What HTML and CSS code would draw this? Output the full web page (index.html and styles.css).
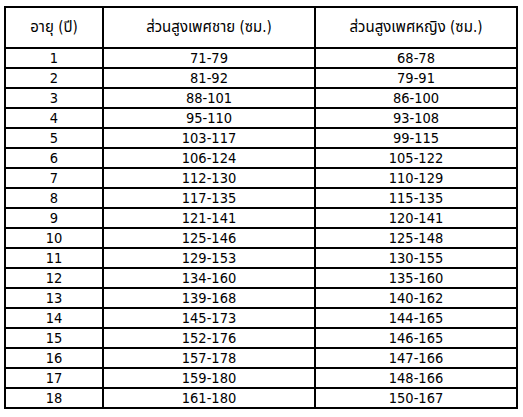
FILE: index.html
```html
<!DOCTYPE html>
<html lang="th">
<head>
<meta charset="utf-8">
<link rel="stylesheet" href="styles.css">
</head>
<body>
<table class="grid">
<colgroup><col class="c1"><col class="c2"><col class="c3"></colgroup>
<thead>
<tr><th>อายุ (ปี)</th><th>ส่วนสูงเพศชาย (ซม.)</th><th>ส่วนสูงเพศหญิง (ซม.)</th></tr>
</thead>
<tbody>
<tr><td>1</td><td>71-79</td><td>68-78</td></tr>
<tr><td>2</td><td>81-92</td><td>79-91</td></tr>
<tr><td>3</td><td>88-101</td><td>86-100</td></tr>
<tr><td>4</td><td>95-110</td><td>93-108</td></tr>
<tr><td>5</td><td>103-117</td><td>99-115</td></tr>
<tr><td>6</td><td>106-124</td><td>105-122</td></tr>
<tr><td>7</td><td>112-130</td><td>110-129</td></tr>
<tr><td>8</td><td>117-135</td><td>115-135</td></tr>
<tr><td>9</td><td>121-141</td><td>120-141</td></tr>
<tr><td>10</td><td>125-146</td><td>125-148</td></tr>
<tr><td>11</td><td>129-153</td><td>130-155</td></tr>
<tr><td>12</td><td>134-160</td><td>135-160</td></tr>
<tr><td>13</td><td>139-168</td><td>140-162</td></tr>
<tr><td>14</td><td>145-173</td><td>144-165</td></tr>
<tr><td>15</td><td>152-176</td><td>146-165</td></tr>
<tr><td>16</td><td>157-178</td><td>147-166</td></tr>
<tr><td>17</td><td>159-180</td><td>148-166</td></tr>
<tr><td>18</td><td>161-180</td><td>150-167</td></tr>
</tbody>
</table>
</body>
</html>
```
FILE: styles.css
```css
html, body {
  margin: 0;
  padding: 0;
  background: #fff;
}
body {
  padding: 6px 0 0 4px;
  font-family: "DejaVu Sans Condensed", "DejaVu Sans", "Noto Sans Thai", "Noto Sans", sans-serif;
  font-size: 14.5px;
  color: #000;
}
.grid {
  border-collapse: collapse;
  table-layout: fixed;
  width: 512px;
}
.c1 { width: 98px; }
.c2 { width: 212px; }
.c3 { width: 202px; }
.grid th, .grid td {
  border: 2px solid #000;
  text-align: center;
  padding: 0;
  font-weight: normal;
}
.grid th {
  height: 39px;
  font-size: 15px;
}
.grid td {
  height: 18px;
  line-height: 18px;
}
```
